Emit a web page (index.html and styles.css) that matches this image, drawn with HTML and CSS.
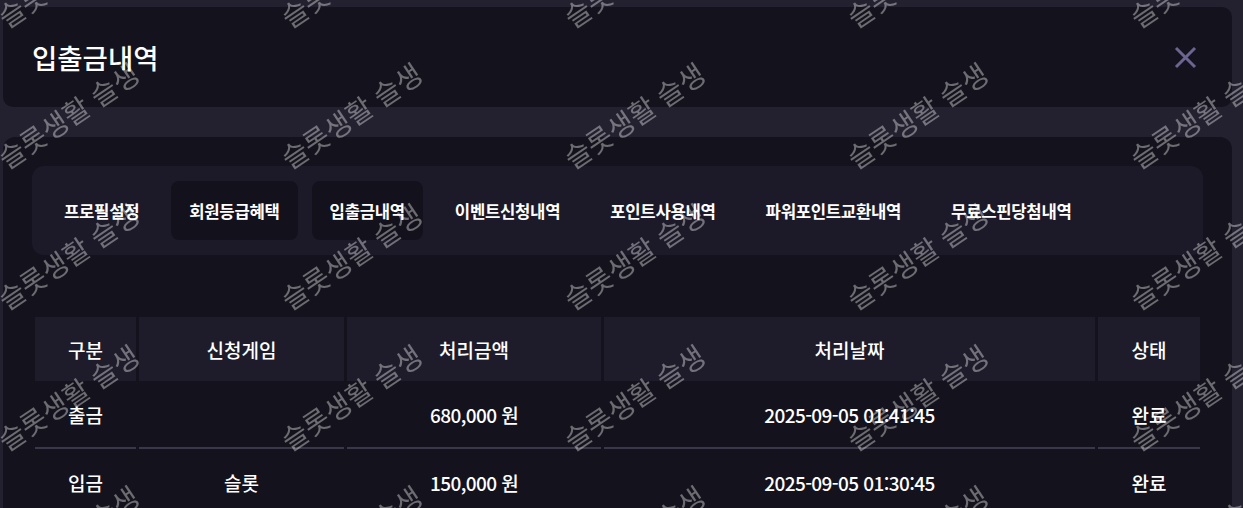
FILE: index.html
```html
<!DOCTYPE html>
<html lang="ko">
<head>
    <meta charset="UTF-8">
    <meta name="viewport" content="width=device-width, initial-scale=1.0">
    <title>입출금내역</title>
    <link rel="stylesheet" href="styles.css">
</head>
<body>
    <div class="modal-head">
        <div class="title">입출금내역</div>
        <button class="close" aria-label="닫기">
            <svg width="23" height="23" viewBox="0 0 23 23">
                <path d="M2 2 L21 21 M21 2 L2 21" stroke="#6b6690" stroke-width="3" fill="none"/>
            </svg>
        </button>
    </div>

    <div class="modal-body">
        <div class="tabs">
            <a class="tab">프로필설정</a>
            <a class="tab on">회원등급혜택</a>
            <a class="tab on">입출금내역</a>
            <a class="tab">이벤트신청내역</a>
            <a class="tab">포인트사용내역</a>
            <a class="tab">파워포인트교환내역</a>
            <a class="tab">무료스핀당첨내역</a>
        </div>

        <table class="history">
            <thead>
                <tr>
                    <th class="c-type">구분</th>
                    <th class="c-game">신청게임</th>
                    <th class="c-amount">처리금액</th>
                    <th class="c-date">처리날짜</th>
                    <th class="c-state">상태</th>
                </tr>
            </thead>
            <tbody>
                <tr>
                    <td>출금</td>
                    <td></td>
                    <td class="num">680,000 원</td>
                    <td class="num">2025-09-05 01:41:45</td>
                    <td>완료</td>
                </tr>
                <tr>
                    <td>입금</td>
                    <td>슬롯</td>
                    <td class="num">150,000 원</td>
                    <td class="num">2025-09-05 01:30:45</td>
                    <td>완료</td>
                </tr>
            </tbody>
        </table>
    </div>

    <div class="watermark">
        <span>슬롯생활 슬생</span><span>슬롯생활 슬생</span><span>슬롯생활 슬생</span><span>슬롯생활 슬생</span><span>슬롯생활 슬생</span>
        <span>슬롯생활 슬생</span><span>슬롯생활 슬생</span><span>슬롯생활 슬생</span><span>슬롯생활 슬생</span><span>슬롯생활 슬생</span>
        <span>슬롯생활 슬생</span><span>슬롯생활 슬생</span><span>슬롯생활 슬생</span><span>슬롯생활 슬생</span><span>슬롯생활 슬생</span>
        <span>슬롯생활 슬생</span><span>슬롯생활 슬생</span><span>슬롯생활 슬생</span><span>슬롯생활 슬생</span><span>슬롯생활 슬생</span>
        <span>슬롯생활 슬생</span><span>슬롯생활 슬생</span><span>슬롯생활 슬생</span><span>슬롯생활 슬생</span><span>슬롯생활 슬생</span>
    </div>
</body>
</html>
```

FILE: styles.css
```css
body {
    font-family: "Noto Sans CJK KR", "Noto Sans", sans-serif;
    margin: 0;
    padding: 7px 11px 0 3px;
    background-color: #23212f;
    color: white;
    overflow: hidden;
}
.modal-head {
    display: flex;
    align-items: center;
    justify-content: space-between;
    height: 100px;
    padding: 0 35px 0 29px;
    background: #14121c;
    border-radius: 10px;
}
.title {
    font-size: 27.5px;
    font-weight: 500;
}
.close {
    background: none;
    border: none;
    padding: 0;
    width: 23px;
    height: 23px;
    cursor: pointer;
}
.close svg {
    display: block;
}
.modal-body {
    margin-top: 30px;
    background: #14121c;
    border-radius: 12px 12px 0 0;
    padding: 29px 29px 40px;
}
.tabs {
    display: flex;
    gap: 14px;
    padding: 15px 14px;
    background: #1c1a28;
    border-radius: 12px;
}
.tab {
    display: flex;
    align-items: center;
    height: 59px;
    padding: 0 18px;
    font-size: 16.7px;
    font-weight: 700;
    letter-spacing: -0.3px;
    border-radius: 8px;
    cursor: pointer;
}
.tab.on {
    background: #13111b;
}
.history {
    width: 1171px;
    margin-top: 62px;
    border-collapse: separate;
    border-spacing: 3px 0;
    font-size: 19px;
    font-weight: 500;
    text-align: center;
}
.history th {
    background: #1e1c2b;
    font-weight: 500;
    height: 64px;
    padding: 0;
}
.history td {
    height: 66px;
    padding: 0;
    border-bottom: 2px solid #3a3848;
}
.history td.num {
    letter-spacing: -0.6px;
}
.c-type { width: 101px; }
.c-game { width: 205px; }
.c-amount { width: 254px; }
.c-date { width: 491px; }
.c-state { width: 102px; }
.watermark {
    position: fixed;
    top: -97px;
    left: -74px;
    display: grid;
    grid-template-columns: repeat(5, 283px);
    grid-auto-rows: 141px;
    pointer-events: none;
    z-index: 10;
}
.watermark span {
    display: flex;
    align-items: center;
    justify-content: center;
    font-size: 28px;
    white-space: nowrap;
    color: rgba(255, 255, 255, 0.38);
    transform: rotate(-34deg);
}
```
